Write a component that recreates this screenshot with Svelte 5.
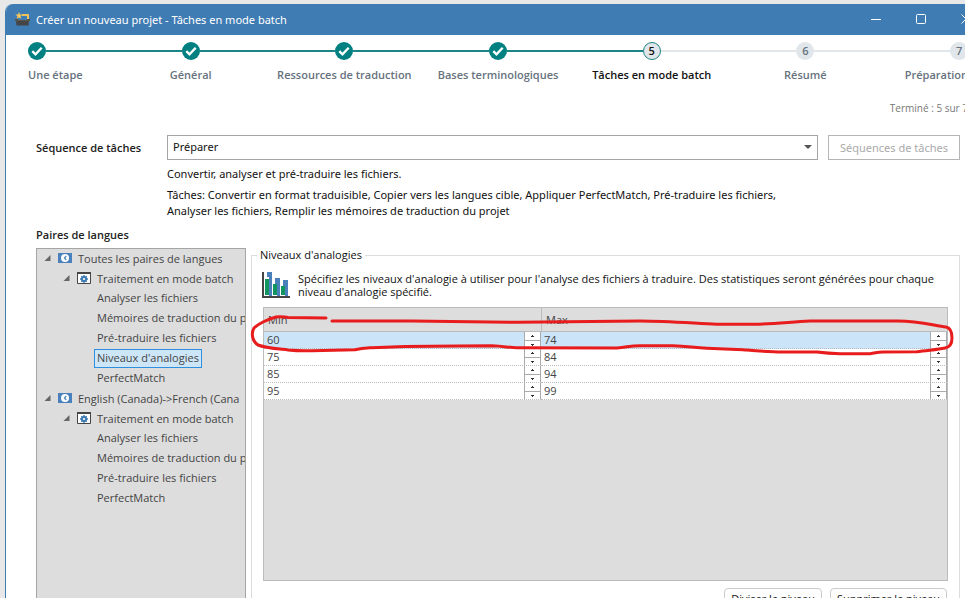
<script>
  const steps = [
    { label: 'Une étape', state: 'done' },
    { label: 'Général', state: 'done' },
    { label: 'Ressources de traduction', state: 'done' },
    { label: 'Bases terminologiques', state: 'done' },
    { label: 'Tâches en mode batch', state: 'current' },
    { label: 'Résumé', state: 'todo' },
    { label: 'Préparation', state: 'todo' }
  ];

  const tree = [
    {
      label: 'Toutes les paires de langues',
      items: ['Analyser les fichiers', 'Mémoires de traduction du p', 'Pré-traduire les fichiers', 'Niveaux d\'analogies', 'PerfectMatch']
    },
    {
      label: 'English (Canada)->French (Cana',
      items: ['Analyser les fichiers', 'Mémoires de traduction du p', 'Pré-traduire les fichiers', 'PerfectMatch']
    }
  ];

  let selected = $state('Niveaux d\'analogies');
  let activeRow = $state(0);
  let levels = $state([
    { min: 60, max: 74 },
    { min: 75, max: 84 },
    { min: 85, max: 94 },
    { min: 95, max: 99 }
  ]);
</script>

{#snippet twisty()}
  <svg class="twisty" width="8" height="8" viewBox="0 0 8 8" aria-hidden="true"><path d="M6.500 1v6h-6z" fill="#666" /></svg>
{/snippet}

<div class="desktop">
  <div class="window">
    <header class="titlebar">
      <svg width="15" height="15" viewBox="0 0 15 15" aria-hidden="true">
        <path d="M7 2h7v6h-2V4H7z" fill="#f0c05a" />
        <path d="M4 0l1 2.400 2.600.2-2 1.700.7 2.500L4 5.500 1.800 6.800l.6-2.500-2-1.700 2.600-.2z" fill="#f6c55c" />
        <path d="M1 8h13l-.5 5.500h-12z" fill="#454545" />
        <path d="M0 7h3v1h9V7h3v2H0z" fill="#5a5348" />
      </svg>
      <h1>Créer un nouveau projet - Tâches en mode batch</h1>
      <div class="winbtns">
        <button type="button" aria-label="Réduire"><svg width="11" height="11" viewBox="0 0 11 11"><path d="M0 5.500h10" stroke="#fff" /></svg></button>
        <button type="button" aria-label="Agrandir"><svg width="11" height="11" viewBox="0 0 11 11"><rect x=".5" y=".5" width="9" height="9" rx="1" fill="none" stroke="#fff" /></svg></button>
        <button type="button" aria-label="Fermer"><svg width="11" height="11" viewBox="0 0 11 11"><path d="M.5.500l9 9m0-9l-9 9" stroke="#fff" /></svg></button>
      </div>
    </header>

    <ol class="steps">
      {#each steps as step, i}
        <li class={step.state}>
          <span class="marker">
            {#if step.state === 'done'}
              <svg width="18" height="18" viewBox="0 0 18 18" aria-hidden="true"><path d="M4.300 9.200l3.200 3.200 6.200-6.600" fill="none" stroke="#fff" stroke-width="2.400" /></svg>
            {:else}
              {i + 1}
            {/if}
          </span>
          <span class="steplabel">{step.label}</span>
        </li>
        {#if i < steps.length - 1}
          <li class="line" class:on={i < 4} aria-hidden="true"></li>
        {/if}
      {/each}
    </ol>
    <p class="progress">Terminé : 5 sur 7</p>

    <div class="form">
      <label class="heading" for="sequence">Séquence de tâches</label>
      <div class="combo">
        <select id="sequence"><option>Préparer</option></select>
        <svg width="8" height="4" viewBox="0 0 8 4" aria-hidden="true"><path d="M0 0h8L4 4z" fill="#555" /></svg>
      </div>
      <button type="button" class="seqbtn" disabled>Séquences de tâches</button>
      <div class="description">
        <p>Convertir, analyser et pré-traduire les fichiers.</p>
        <p>Tâches: Convertir en format traduisible, Copier vers les langues cible, Appliquer PerfectMatch, Pré-traduire les fichiers,<br />Analyser les fichiers, Remplir les mémoires de traduction du projet</p>
      </div>
    </div>

    <h2 class="heading pairs">Paires de langues</h2>

    <div class="main">
      <nav class="tree" aria-label="Paires de langues">
        {#each tree as group, g}
          <div class="node root">
            {@render twisty()}
            <svg width="14" height="10" viewBox="0 0 14 10" aria-hidden="true">
              <path d="M0 0h14v10H0z" fill="#4a80bb" />
              <circle cx="7" cy="5" r="4" fill="#fff" />
              <path d="M8.200 3L6.500 5l1.700 2" fill="none" stroke="#4a80bb" stroke-width="1.200" />
            </svg>
            <span>{group.label}</span>
          </div>
          <div class="node sub">
            {@render twisty()}
            <svg width="14" height="12" viewBox="0 0 14 12" aria-hidden="true">
              <path d="M.5.500h13v11H.5z" fill="#fff" stroke="#454545" />
              <path d="M0 0h14v2H0z" fill="#454545" />
              <path d="M7 3v8M3 7h8M4.300 4.300l5.400 5.400M9.700 4.300L4.300 9.700" stroke="#3f7cb3" stroke-width="1.400" />
              <circle cx="7" cy="7" r="2.200" fill="none" stroke="#3f7cb3" stroke-width="1.800" />
              <circle cx="7" cy="7" r="1.100" fill="#fff" />
            </svg>
            <span>Traitement en mode batch</span>
          </div>
          {#each group.items as item}
            <button type="button" class="leaf" class:selected={g === 0 && item === selected} onclick={() => (selected = item)}>{item}</button>
          {/each}
        {/each}
      </nav>

      <fieldset class="levels">
        <legend>Niveaux d'analogies</legend>
        <div class="intro">
          <svg width="28" height="27" viewBox="0 0 28 27" aria-hidden="true">
            <path d="M5 0h5v24H7V5H5zM13 6h5v18h-3v-7h-2zM21 8h5v16h-3v-8h-2z" fill="#4a80bb" />
            <path d="M3 7h4v16H3zM11 12h4v11h-4zM19 14h4v9h-4z" fill="#129660" />
            <path d="M0 0h2v24h26v2H0z" fill="#454545" />
          </svg>
          <p>Spécifiez les niveaux d'analogie à utiliser pour l'analyse des fichiers à traduire. Des statistiques seront générées pour chaque niveau d'analogie spécifié.</p>
        </div>
        <div class="grid">
          <table>
            <colgroup><col class="mincol" /><col /></colgroup>
            <thead>
              <tr><th scope="col">Min</th><th scope="col">Max</th></tr>
            </thead>
            <tbody>
              {#each levels as level, r}
                <tr class:active={r === activeRow} onfocusin={() => (activeRow = r)}>
                  {#each ['min', 'max'] as key}
                    <td>
                      <div class="spin">
                        <input type="text" inputmode="numeric" aria-label="{key} {r + 1}" bind:value={level[key]} />
                        <div class="arrows">
                          <button type="button" aria-label="Augmenter" onclick={() => level[key]++}><svg width="3" height="2" viewBox="0 0 3 2"><path d="M1 0h1v1h1v1H0V1h1z" fill="#333" /></svg></button>
                          <button type="button" aria-label="Diminuer" onclick={() => level[key]--}><svg width="3" height="2" viewBox="0 0 3 2"><path d="M0 0h3v1H2v1H1V1H0z" fill="#333" /></svg></button>
                        </div>
                      </div>
                    </td>
                  {/each}
                </tr>
              {/each}
            </tbody>
          </table>
        </div>
        <div class="actions">
          <button type="button">Diviser le niveau</button>
          <button type="button">Supprimer le niveau</button>
        </div>
      </fieldset>
    </div>
  </div>

  <svg class="ink" width="965" height="598" viewBox="0 0 965 598" aria-hidden="true">
    <path d="M326 318L288 317.500C283 317 281 316 276 317C268 319 258 324 254 328C251 333 252 341 258 345C265 348 280 349 288 350C298 351 304 351 312 350.700L355 349.700C362 348 366 348 372 347.700L405 346.500L458 346L492 345.700C504 346 510 348 518 347.700L617 348C628 347 630 345.700 640 345.700H673C688 346 694 348 707 348.300L743 349.700C758 351 768 352 783 352H817C825 353 832 353.500 840 353.700H870C876 353 877 352 883 352L917 351.700C927 350 937 350 945 348C951 347 952 342 952 338C952 332 951 328 946 327C932 325 918 321 898 321H810C790 322 774 324 753 324.300H717C690 323 665 321 640 321L518 322.300L412 321H332" />
  </svg>
</div>

<style>
  :global(body) { margin: 0; }
  .desktop {
    position: relative;
    height: 100vh;
    box-sizing: border-box;
    padding: 4px 0 0 5px;
    overflow: hidden;
    background: #e8e8e8;
    font: 11px/16px "Open Sans", "Noto Sans", sans-serif;
    color: #111;
  }
  .desktop *, .desktop *::before { box-sizing: border-box; }
  p, h1, h2, ol { margin: 0; padding: 0; }
  button, input, select { font: inherit; color: inherit; margin: 0; }
  svg { display: block; flex: none; }
  .window {
    display: flex;
    flex-direction: column;
    height: calc(100vh + 24px);
    border-left: 1px solid #3f7cb3;
    border-radius: 8px 0 0 0;
    background: #fff;
    overflow: hidden;
  }
  .titlebar {
    display: flex;
    align-items: center;
    flex: none;
    gap: 6px;
    height: 31px;
    padding-left: 9px;
    background: #3f7cb3;
    color: #fff;
  }
  h1 { flex: 1; font: 400 11px/16px "Noto Sans", sans-serif; white-space: nowrap; }
  .winbtns { display: flex; margin-right: -24px; }
  .winbtns button {
    display: grid;
    place-items: center;
    width: 45px;
    height: 31px;
    padding: 0;
    border: 0;
    background: none;
  }
  .steps {
    display: flex;
    flex: none;
    margin: 7px -3px 0 22px;
    height: 58px;
    list-style: none;
    font-weight: 600;
    color: #66727e;
  }
  .steps li { display: flex; flex-direction: column; align-items: center; gap: 7px; width: 18px; flex: none; }
  .steps li:first-child { align-items: flex-start; }
  .steps li:last-child { align-items: flex-end; }
  .steps .line { flex: 1; height: 2px; margin-top: 8px; background: #e1e6ea; }
  .steps .line.on { background: #1d8585; }
  .marker {
    display: grid;
    place-items: center;
    width: 18px;
    height: 18px;
    border-radius: 50%;
    background: #e1e6ea;
  }
  .done .marker { background: #008080; }
  .steps .current { color: #111; }
  .current .marker { border: 1px solid #1d8585; }
  .steplabel { white-space: nowrap; }
  .progress { flex: none; margin: 0 -3px 0 0; text-align: right; font-size: 10px; color: #777; }
  .form {
    display: grid;
    flex: none;
    grid-template-columns: 121px 1fr 132px;
    column-gap: 10px;
    margin: 19px 5px 0 30px;
    align-items: center;
  }
  .heading { font-size: 11px; font-weight: 600; color: #222; }
  .combo { position: relative; height: 25px; }
  .combo select {
    appearance: none;
    width: 100%;
    height: 25px;
    padding: 0 20px 2px 5px;
    border: 1px solid #a5a5a5;
    border-radius: 0;
    background: #fff;
  }
  .combo svg { position: absolute; right: 6px; top: 10px; pointer-events: none; }
  .combo select, .seqbtn, .description { font-family: "Noto Sans", sans-serif; }
  .seqbtn { height: 25px; padding: 0; border: 1px solid #b5b5b5; background: #fff; color: #aaa; }
  .description { grid-column: 2 / -1; display: grid; gap: 5px; padding-top: 6px; }
  .pairs { flex: none; margin: 8px 0 0 30px; }
  .main { display: flex; flex: 1; gap: 5px; min-height: 0; margin: 5px 5px 0 30px; }
  .tree {
    display: flex;
    flex: none;
    flex-direction: column;
    align-items: flex-start;
    gap: 1px;
    width: 210px;
    border: 1px solid #a5a5a5;
    background: #ddd;
    color: #444;
    overflow: hidden;
    white-space: nowrap;
  }
  .node { display: flex; align-items: center; gap: 6px; height: 19px; padding: 0 0 1px 7px; }
  .sub { padding-left: 26px; }
  .node, .leaf { line-height: 15px; }
  .leaf { height: 19px; margin-left: 57px; padding: 0 2px 2px; border: 1px solid transparent; background: none; }
  .selected { border-color: #2f8fdb; background: #cde6f7; }
  .levels {
    display: flex;
    flex: 1;
    flex-direction: column;
    min-width: 0;
    margin: 0;
    padding: 0 11px 10px;
    border: 1px solid #dcdcdc;
  }
  legend { margin-left: -6px; padding: 0 3px; height: 15px; line-height: 14px; }
  .intro { display: flex; gap: 8px; height: 44px; margin-left: -1px; padding-top: 9px; line-height: 13px; }
  .intro p { padding-right: 4px; }
  .grid { height: 274px; border: 1px solid #bcbcbc; background: #ddd; }
  table { width: 100%; table-layout: fixed; border-spacing: 0; color: #444; }
  .mincol { width: 277px; }
  th { height: 24px; padding: 0 4px; border-bottom: 1px solid #bcbcbc; text-align: left; font-weight: 400; }
  th + th { border-left: 1px solid #bcbcbc; }
  td { height: 17px; padding: 0; border-bottom: 1px dotted #bcbcbc; background: #fff; }
  .active td { background: #cce4f7; }
  .spin { display: flex; height: 16px; }
  .spin input { flex: 1; min-width: 0; height: 16px; padding: 0 0 2px 3px; border: 0; background: none; outline: 0; line-height: 14px; }
  .arrows { display: grid; grid-template-rows: 8px 8px; width: 17px; border: solid #aaa; border-width: 0 1px; background: #fff; }
  .arrows button { display: grid; place-items: center; padding: 0; border: 0; background: #fff; }
  .arrows button + button { border-top: 1px solid #aaa; }
  .actions { display: flex; justify-content: flex-end; gap: 8px; padding: 7px 1px 0 0; }
  .actions button { height: 22px; padding: 0 6px; border: 1px solid #ccc; border-radius: 4px; background: #fdfdfd; line-height: 18px; white-space: nowrap; }
  .ink { position: absolute; left: 0; top: 0; pointer-events: none; fill: none; stroke: #e81c1c; stroke-width: 3; stroke-linecap: round; stroke-linejoin: round; }
</style>
